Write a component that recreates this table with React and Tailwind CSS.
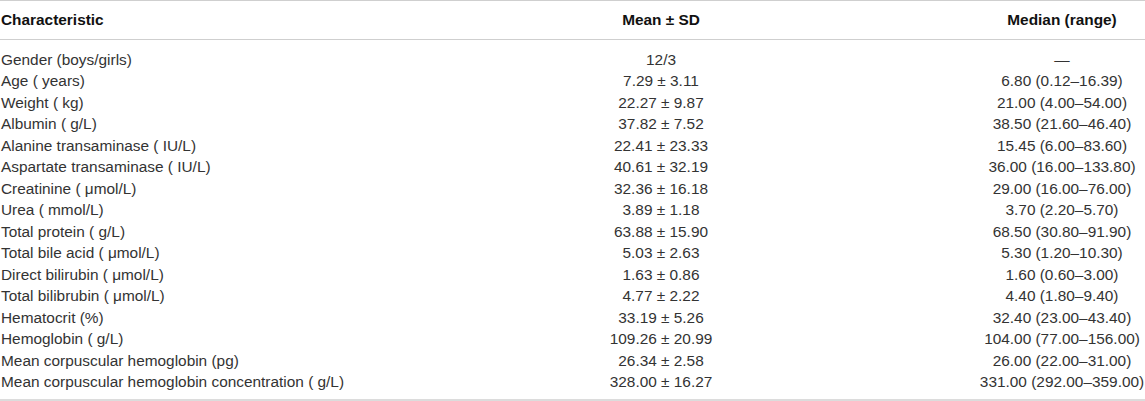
import React from "react";

const rows = [
  ["Gender (boys/girls)", "12/3", "—"],
  ["Age ( years)", "7.29 ± 3.11", "6.80 (0.12–16.39)"],
  ["Weight ( kg)", "22.27 ± 9.87", "21.00 (4.00–54.00)"],
  ["Albumin ( g/L)", "37.82 ± 7.52", "38.50 (21.60–46.40)"],
  ["Alanine transaminase ( IU/L)", "22.41 ± 23.33", "15.45 (6.00–83.60)"],
  ["Aspartate transaminase ( IU/L)", "40.61 ± 32.19", "36.00 (16.00–133.80)"],
  ["Creatinine ( μmol/L)", "32.36 ± 16.18", "29.00 (16.00–76.00)"],
  ["Urea ( mmol/L)", "3.89 ± 1.18", "3.70 (2.20–5.70)"],
  ["Total protein ( g/L)", "63.88 ± 15.90", "68.50 (30.80–91.90)"],
  ["Total bile acid ( μmol/L)", "5.03 ± 2.63", "5.30 (1.20–10.30)"],
  ["Direct bilirubin ( μmol/L)", "1.63 ± 0.86", "1.60 (0.60–3.00)"],
  ["Total bilibrubin ( μmol/L)", "4.77 ± 2.22", "4.40 (1.80–9.40)"],
  ["Hematocrit (%)", "33.19 ± 5.26", "32.40 (23.00–43.40)"],
  ["Hemoglobin ( g/L)", "109.26 ± 20.99", "104.00 (77.00–156.00)"],
  ["Mean corpuscular hemoglobin (pg)", "26.34 ± 2.58", "26.00 (22.00–31.00)"],
  ["Mean corpuscular hemoglobin concentration ( g/L)", "328.00 ± 16.27", "331.00 (292.00–359.00)"],
];

export default function App() {
  return (
    <div
      className="w-[1145px] h-[401px] bg-white text-[15.4px] text-[#333]"
      style={{ fontFamily: '"Liberation Sans", Arial, sans-serif' }}
    >
      <div className="grid grid-cols-[343px_1fr_166px] h-[40px] items-center border-t border-b border-[#cfcfcf] font-bold text-[#111] whitespace-nowrap">
        <div className="pl-[1px]">Characteristic</div>
        <div className="text-center">Mean ± SD</div>
        <div className="text-center">Median (range)</div>
      </div>
      <div className="pt-[9px] pb-[6px] border-b-2 border-[#dcdcdc]">
        {rows.map((r, i) => (
          <div
            key={i}
            className="grid grid-cols-[343px_1fr_166px] leading-[21.47px] whitespace-nowrap"
          >
            <div className="pl-[1px]">{r[0]}</div>
            <div className="text-center">{r[1]}</div>
            <div className="text-center">{r[2]}</div>
          </div>
        ))}
      </div>
    </div>
  );
}
